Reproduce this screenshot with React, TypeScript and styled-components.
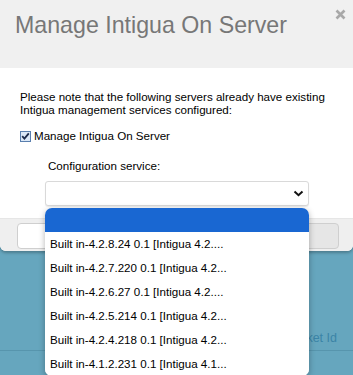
import React from "react";
import styled, { createGlobalStyle } from "styled-components";

const options = [
  "",
  "Built in-4.2.8.24 0.1 [Intigua 4.2....",
  "Built in-4.2.7.220 0.1 [Intigua 4.2...",
  "Built in-4.2.6.27 0.1 [Intigua 4.2....",
  "Built in-4.2.5.214 0.1 [Intigua 4.2...",
  "Built in-4.2.4.218 0.1 [Intigua 4.2...",
  "Built in-4.1.2.231 0.1 [Intigua 4.1...",
];

const Global = createGlobalStyle`
  html, body {
    margin: 0;
    padding: 0;
    height: 100%;
    overflow: hidden;
  }
  body {
    background: #66a6be;
    font-family: "Liberation Sans", Arial, sans-serif;
  }
`;

const Page = styled.div`
  width: 353px;
  height: 375px;
  position: relative;
  overflow: hidden;
`;

const Modal = styled.div`
  position: relative;
  background: #fff;
  border-radius: 0 0 6px 6px;
  box-shadow: 0 2px 3px rgba(0, 0, 0, 0.25);
`;

const Header = styled.div`
  height: 68px;
  box-sizing: border-box;
  padding: 11px 15px 0;
  background: #f0f0f0;
`;

const Title = styled.h3`
  margin: 0;
  font-size: 23.2px;
  font-weight: normal;
  line-height: 28px;
  color: #777;
`;

const Close = styled.span`
  position: absolute;
  top: 9px;
  right: 7px;
  width: 11px;
  height: 11px;
  display: flex;
`;

const Body = styled.div`
  padding: 22px 20px 12px;
  font-size: 11.6px;
  color: #000;
`;

const Note = styled.p`
  margin: 0;
  line-height: 13px;
  white-space: nowrap;
`;

const CheckRow = styled.label`
  display: flex;
  align-items: center;
  margin-top: 13px;
  height: 14px;
  line-height: 14px;
`;

const Box = styled.span`
  width: 11px;
  height: 11px;
  margin-right: 3px;
  display: flex;
`;

const FieldLabel = styled.div`
  margin: 16px 0 0 28px;
  line-height: 14px;
`;

const SelectWrap = styled.div`
  position: relative;
  margin: 8px 0 0 25px;
  width: 264px;
`;

const SelectBox = styled.div`
  height: 25px;
  box-sizing: border-box;
  border: 1px solid #d9d9d9;
  border-radius: 3px;
  background: #fff;
  box-shadow: 0 1px 1px rgba(0, 0, 0, 0.08);
  display: flex;
  align-items: center;
  justify-content: flex-end;
  padding-right: 4px;
`;

const Popup = styled.ul`
  position: absolute;
  top: 27px;
  left: 0;
  width: 264px;
  margin: 0;
  padding: 0;
  list-style: none;
  background: #fff;
  border-radius: 7px;
  overflow: hidden;
  box-shadow: 0 2px 6px rgba(0, 0, 0, 0.3);
  z-index: 5;
`;

const Option = styled.li<{ $active?: boolean }>`
  height: 24px;
  line-height: 24px;
  padding-left: 5px;
  font-size: 11.6px;
  color: #000;
  white-space: nowrap;
  background: ${(p) => (p.$active ? "#1967d2" : "#fff")};
`;

const Footer = styled.div`
  height: 33px;
  box-sizing: border-box;
  padding: 4px 14px 0 17px;
  background: #efefef;
  border-top: 1px solid #e6e6e6;
  border-radius: 0 0 6px 6px;
  display: flex;
  gap: 10px;
`;

const Button = styled.div<{ $primary?: boolean }>`
  flex: 1;
  height: 26px;
  box-sizing: border-box;
  border: 1px solid #cfcfcf;
  border-radius: 4px;
  background: ${(p) => (p.$primary ? "#e6e6e6" : "#fff")};
`;

const Table = styled.div`
  margin-top: 80px;
  height: 19px;
  border-bottom: 1px solid #5795ad;
  display: flex;
  justify-content: flex-end;
  padding-right: 16px;
`;

const HeadCell = styled.span`
  font-size: 12.5px;
  line-height: 14px;
  color: #3b84a6;
`;

export default function App() {
  return (
    <Page>
      <Global />
      <Modal>
        <Header>
          <Title>Manage Intigua On Server</Title>
        </Header>
        <Close>
          <svg width="11" height="11" viewBox="0 0 11 11">
            <path d="M1.5 1.5 L9.5 9.5 M9.5 1.5 L1.5 9.5" stroke="#a8a8a8" strokeWidth="2.6" />
          </svg>
        </Close>
        <Body>
          <Note>
            Please note that the following servers already have existing
            <br />
            Intigua management services configured:
          </Note>
          <CheckRow>
            <Box>
              <svg width="11" height="11" viewBox="0 0 11 11">
                <rect x="0.5" y="0.5" width="10" height="10" fill="#dbe8f7" stroke="#5a7fae" />
                <path d="M2.2 5.2 L4.4 7.6 L8.8 2.4" fill="none" stroke="#1b2a4a" strokeWidth="1.8" />
              </svg>
            </Box>
            Manage Intigua On Server
          </CheckRow>
          <FieldLabel>Configuration service:</FieldLabel>
          <SelectWrap>
            <SelectBox>
              <svg width="11" height="7" viewBox="0 0 11 7">
                <path d="M1.5 1.5 L5.5 5.2 L9.5 1.5" fill="none" stroke="#111" strokeWidth="2" />
              </svg>
            </SelectBox>
            <Popup>
              {options.map((o, i) => (
                <Option key={i} $active={i === 0}>
                  {o}
                </Option>
              ))}
            </Popup>
          </SelectWrap>
        </Body>
        <Footer>
          <Button />
          <Button $primary />
        </Footer>
      </Modal>
      <Table>
        <HeadCell>Ticket Id</HeadCell>
      </Table>
    </Page>
  );
}
